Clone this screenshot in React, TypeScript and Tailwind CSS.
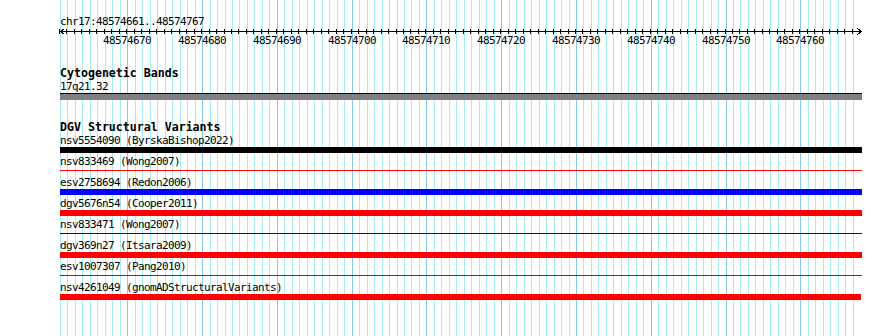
import React from 'react';

const START = 48574661;
const END = 48574767;
const LEFT = 60;
const PX = 7.478;

const bases = Array.from({ length: END - START + 1 }, (_, i) => i);
const xAt = (i: number) => Math.round(LEFT + i * PX);

type Variant = { label: string; color: string; thick: boolean; width?: string };

const variants: Variant[] = [
  { label: 'nsv5554090 (ByrskaBishop2022)', color: 'bg-black', thick: true },
  { label: 'nsv833469 (Wong2007)', color: 'bg-[#ff0000]', thick: false },
  { label: 'esv2758694 (Redon2006)', color: 'bg-[#0000ff]', thick: true },
  { label: 'dgv5676n54 (Cooper2011)', color: 'bg-[#ff0000]', thick: true },
  { label: 'nsv833471 (Wong2007)', color: 'bg-[#0000cc]', thick: false },
  { label: 'dgv369n27 (Itsara2009)', color: 'bg-[#ff0000]', thick: true },
  { label: 'esv1007307 (Pang2010)', color: 'bg-[#e00000]', thick: false },
  { label: 'nsv4261049 (gnomADStructuralVariants)', color: 'bg-[#ff0000]', thick: true, width: 'w-[801px]' },
];

const small = "font-['DejaVu_Sans_Mono',monospace] text-[11px] tracking-[-0.62px] leading-[13px] text-black whitespace-pre";
const bold = "font-['DejaVu_Sans_Mono',monospace] font-bold text-[11.6px] leading-[13px] text-black whitespace-pre";

function Grid() {
  // one light line per base, a stronger one every ten bases
  return (
    <svg className="absolute inset-0 pointer-events-none" width={890} height={336} shapeRendering="crispEdges">
      {bases.map((i) => (
        <line
          key={i}
          x1={xAt(i) + 0.5}
          x2={xAt(i) + 0.5}
          y1={0}
          y2={336}
          stroke={(START + i) % 10 === 0 ? '#86c9ea' : '#a9ecf0'}
          strokeWidth={1}
        />
      ))}
    </svg>
  );
}

function Ruler() {
  const w = 802;
  return (
    <svg width={w + 2} height={20} className="block -ml-px" shapeRendering="crispEdges">
      <rect x={1} y={3} width={w} height={1} fill="#000" />
      {bases.map((i) => {
        const x = xAt(i) - LEFT;
        return <rect key={i} x={x} y={1} width={1} height={5} fill="#000" />;
      })}
      <path d="M1.5 3.5 L5.5 0.5 M1.5 3.5 L5.5 6.5" stroke="#000" strokeWidth={1} fill="none" />
      <path d={`M${w + 0.5} 3.5 L${w - 3.5} 0.5 M${w + 0.5} 3.5 L${w - 3.5} 6.5`} stroke="#000" strokeWidth={1} fill="none" />
      {bases
        .filter((i) => (START + i) % 10 === 0)
        .map((i) => (
          <text
            key={i}
            x={xAt(i) - LEFT + 1}
            y={16}
            textAnchor="middle"
            fontFamily="DejaVu Sans Mono, monospace"
            fontSize={11}
            letterSpacing={-0.62}
            fill="#000"
          >
            {START + i}
          </text>
        ))}
    </svg>
  );
}

export default function App() {
  return (
    <div className="relative w-[890px] h-[336px] bg-white overflow-hidden">
      <Grid />
      <div className="relative pl-[60px] pt-[15px] flex flex-col">
        <div className={small}>chr17:48574661..48574767</div>
        <Ruler />

        {/* Cytogenetic track */}
        <div className={`${bold} mt-[19px]`}>Cytogenetic Bands</div>
        <div className={small}>17q21.32</div>
        <div className="w-[802px] h-[7px] bg-[#808080] border-t border-black" />

        {/* DGV track */}
        <div className={`${bold} mt-[21px]`}>DGV Structural Variants</div>
        {variants.map((v) => (
          <div key={v.label} className="flex flex-col">
            <div className={small}>{v.label}</div>
            <div className="h-[8px]">
              {v.thick ? (
                <div className={`${v.width ?? 'w-[802px]'} h-[6px] ${v.color}`} />
              ) : (
                <div className={`w-[802px] h-px mt-[2px] ${v.color}`} />
              )}
            </div>
          </div>
        ))}
      </div>
    </div>
  );
}
